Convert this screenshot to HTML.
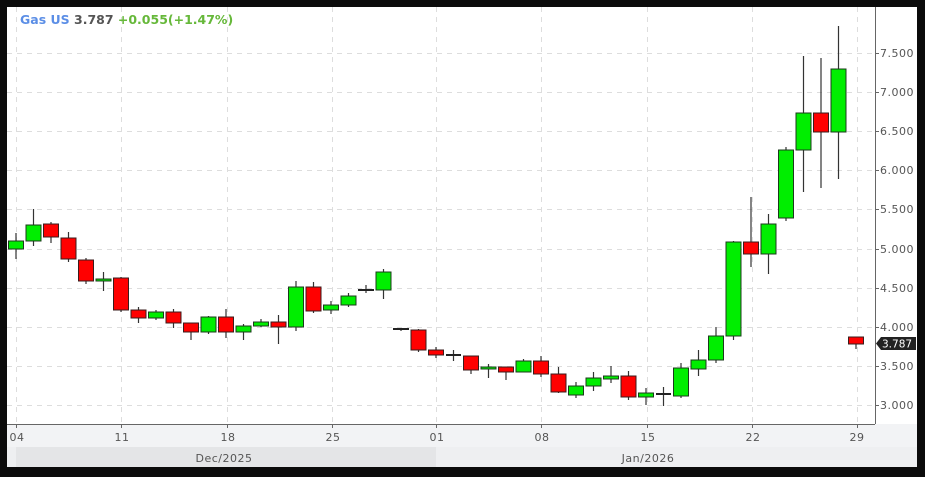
<!DOCTYPE html>
<html><head><meta charset="utf-8"><style>
html,body{margin:0;padding:0;background:#0b0b0b;}
svg{display:block;font-family:"DejaVu Sans","Liberation Sans",sans-serif;}
</style></head><body>
<svg width="925" height="477" viewBox="0 0 925 477" xmlns="http://www.w3.org/2000/svg">
<rect x="0" y="0" width="925" height="477" fill="#0b0b0b"/>
<rect x="7" y="7" width="910" height="417" fill="#fff"/>
<rect x="7" y="424" width="910" height="24" fill="#f2f3f5"/>
<rect x="7" y="447" width="910" height="20" fill="#eeeff1"/>
<rect x="16" y="447" width="420" height="20" fill="#e4e5e7"/>
<g stroke="#ddd" stroke-dasharray="5,5" stroke-width="1">
<line x1="7" y1="53.5" x2="875" y2="53.5"/><line x1="7" y1="92.5" x2="875" y2="92.5"/><line x1="7" y1="131.5" x2="875" y2="131.5"/><line x1="7" y1="170.5" x2="875" y2="170.5"/><line x1="7" y1="209.5" x2="875" y2="209.5"/><line x1="7" y1="249.5" x2="875" y2="249.5"/><line x1="7" y1="288.5" x2="875" y2="288.5"/><line x1="7" y1="327.5" x2="875" y2="327.5"/><line x1="7" y1="366.5" x2="875" y2="366.5"/><line x1="7" y1="405.5" x2="875" y2="405.5"/>
<line x1="16.5" y1="7" x2="16.5" y2="424"/><line x1="121.5" y1="7" x2="121.5" y2="424"/><line x1="227.5" y1="7" x2="227.5" y2="424"/><line x1="332.5" y1="7" x2="332.5" y2="424"/><line x1="436.5" y1="7" x2="436.5" y2="424"/><line x1="541.5" y1="7" x2="541.5" y2="424"/><line x1="647.5" y1="7" x2="647.5" y2="424"/><line x1="752.5" y1="7" x2="752.5" y2="424"/><line x1="857.5" y1="7" x2="857.5" y2="424"/>
</g>
<line x1="875.5" y1="7" x2="875.5" y2="424" stroke="#666"/>
<line x1="7" y1="424.5" x2="875" y2="424.5" stroke="#666"/>
<g stroke="#666">
<line x1="875" y1="53.5" x2="879" y2="53.5"/><line x1="875" y1="92.5" x2="879" y2="92.5"/><line x1="875" y1="131.5" x2="879" y2="131.5"/><line x1="875" y1="170.5" x2="879" y2="170.5"/><line x1="875" y1="209.5" x2="879" y2="209.5"/><line x1="875" y1="249.5" x2="879" y2="249.5"/><line x1="875" y1="288.5" x2="879" y2="288.5"/><line x1="875" y1="327.5" x2="879" y2="327.5"/><line x1="875" y1="366.5" x2="879" y2="366.5"/><line x1="875" y1="405.5" x2="879" y2="405.5"/>
<line x1="16.5" y1="424" x2="16.5" y2="428"/><line x1="121.5" y1="424" x2="121.5" y2="428"/><line x1="227.5" y1="424" x2="227.5" y2="428"/><line x1="332.5" y1="424" x2="332.5" y2="428"/><line x1="436.5" y1="424" x2="436.5" y2="428"/><line x1="541.5" y1="424" x2="541.5" y2="428"/><line x1="647.5" y1="424" x2="647.5" y2="428"/><line x1="752.5" y1="424" x2="752.5" y2="428"/><line x1="857.5" y1="424" x2="857.5" y2="428"/>
</g>
<g font-size="11" fill="#555" letter-spacing="0.5">
<text x="880" y="57">7.500</text><text x="880" y="96">7.000</text><text x="880" y="135">6.500</text><text x="880" y="174">6.000</text><text x="880" y="213">5.500</text><text x="880" y="253">5.000</text><text x="880" y="292">4.500</text><text x="880" y="331">4.000</text><text x="880" y="370">3.500</text><text x="880" y="409">3.000</text>
</g>
<path d="M876 343.5 L881 337 L916 337 L916 350 L881 350 Z" fill="#222"/>
<text x="882" y="347.5" font-size="10.5" fill="#fff">3.787</text>
<g font-size="11" fill="#555" text-anchor="middle" letter-spacing="0.5">
<text x="17" y="441">04</text><text x="122" y="441">11</text><text x="228" y="441">18</text><text x="333" y="441">25</text><text x="437" y="441">01</text><text x="542" y="441">08</text><text x="648" y="441">15</text><text x="753" y="441">22</text><text x="857" y="441">29</text>
<text x="224" y="462">Dec/2025</text><text x="648" y="462">Jan/2026</text>
</g>
<text x="20" y="24" font-size="12.5" font-weight="bold"><tspan fill="#5b8ee6">Gas US </tspan><tspan fill="#555">3.787 </tspan><tspan fill="#66b83a">+0.055(+1.47%)</tspan></text>
<g stroke="#333" stroke-width="1.2">
<line x1="16" y1="233" x2="16" y2="259"/><line x1="33.5" y1="209" x2="33.5" y2="246"/><line x1="51" y1="222" x2="51" y2="243"/><line x1="68.5" y1="232" x2="68.5" y2="262"/><line x1="86" y1="258" x2="86" y2="284"/><line x1="103.5" y1="272" x2="103.5" y2="291"/><line x1="121" y1="277" x2="121" y2="312"/><line x1="138.5" y1="307" x2="138.5" y2="323"/><line x1="156" y1="310" x2="156" y2="320"/><line x1="173.5" y1="309" x2="173.5" y2="328"/><line x1="191" y1="323" x2="191" y2="340"/><line x1="208.5" y1="316" x2="208.5" y2="334"/><line x1="226" y1="309" x2="226" y2="338"/><line x1="243.5" y1="324" x2="243.5" y2="340"/><line x1="261" y1="319" x2="261" y2="327"/><line x1="278.5" y1="315" x2="278.5" y2="344"/><line x1="296" y1="281" x2="296" y2="331"/><line x1="313.5" y1="282" x2="313.5" y2="313"/><line x1="331" y1="301" x2="331" y2="314"/><line x1="348.5" y1="293" x2="348.5" y2="307"/><line x1="366" y1="285" x2="366" y2="293"/><line x1="383.5" y1="269" x2="383.5" y2="299"/>
<line x1="401" y1="328" x2="401" y2="331"/><line x1="418.5" y1="329" x2="418.5" y2="352"/><line x1="436" y1="347" x2="436" y2="358"/><line x1="453.5" y1="350" x2="453.5" y2="361"/><line x1="471" y1="356" x2="471" y2="374"/><line x1="488.5" y1="364" x2="488.5" y2="378"/><line x1="506" y1="367" x2="506" y2="380"/><line x1="523.5" y1="359" x2="523.5" y2="372"/><line x1="541" y1="356" x2="541" y2="377"/><line x1="558.5" y1="367" x2="558.5" y2="393"/><line x1="576" y1="382" x2="576" y2="398"/><line x1="593.5" y1="372" x2="593.5" y2="391"/><line x1="611" y1="366" x2="611" y2="383"/><line x1="628.5" y1="371" x2="628.5" y2="400"/><line x1="646" y1="388" x2="646" y2="405"/><line x1="663.5" y1="387" x2="663.5" y2="406"/><line x1="681" y1="363" x2="681" y2="398"/><line x1="698.5" y1="350" x2="698.5" y2="376"/><line x1="716" y1="327" x2="716" y2="363"/><line x1="733.5" y1="241" x2="733.5" y2="340"/><line x1="751" y1="197" x2="751" y2="267"/><line x1="768.5" y1="214" x2="768.5" y2="274"/><line x1="786" y1="147" x2="786" y2="221"/><line x1="803.5" y1="56" x2="803.5" y2="192"/><line x1="821" y1="58" x2="821" y2="188"/><line x1="838.5" y1="26" x2="838.5" y2="179"/><line x1="856" y1="337" x2="856" y2="349"/>
</g>
<g stroke="#1c3a1c" stroke-width="1">
<g fill="#00ee00">
<rect x="8.5" y="241" width="15" height="8"/><rect x="26" y="225" width="15" height="16"/><rect x="96" y="279" width="15" height="2"/><rect x="148.5" y="312" width="15" height="6"/><rect x="201" y="317" width="15" height="15"/><rect x="236" y="326" width="15" height="6"/><rect x="253.5" y="322" width="15" height="4"/><rect x="288.5" y="287" width="15" height="40"/><rect x="323.5" y="305" width="15" height="5"/><rect x="341" y="296" width="15" height="9"/><rect x="376" y="272" width="15" height="18"/>
<rect x="481" y="367" width="15" height="2"/><rect x="516" y="361" width="15" height="11"/><rect x="568.5" y="386" width="15" height="9"/><rect x="586" y="378" width="15" height="8"/><rect x="603.5" y="376" width="15" height="3"/><rect x="638.5" y="393" width="15" height="4"/><rect x="673.5" y="368" width="15" height="28"/><rect x="691" y="360" width="15" height="9"/><rect x="708.5" y="336" width="15" height="24"/><rect x="726" y="242" width="15" height="94"/><rect x="761" y="224" width="15" height="30"/><rect x="778.5" y="150" width="15" height="68"/><rect x="796" y="113" width="15" height="37"/><rect x="831" y="69" width="15" height="63"/>
</g>
<g fill="#ff0000" stroke="#3a1c1c">
<rect x="43.5" y="224" width="15" height="13"/><rect x="61" y="238" width="15" height="21"/><rect x="78.5" y="260" width="15" height="21"/><rect x="113.5" y="278" width="15" height="32"/><rect x="131" y="310" width="15" height="8"/><rect x="166" y="312" width="15" height="11"/><rect x="183.5" y="323" width="15" height="9"/><rect x="218.5" y="317" width="15" height="15"/><rect x="271" y="322" width="15" height="5"/><rect x="306" y="287" width="15" height="24"/>
<rect x="411" y="330" width="15" height="20"/><rect x="428.5" y="350" width="15" height="5"/><rect x="463.5" y="356" width="15" height="14"/><rect x="498.5" y="367" width="15" height="5"/><rect x="533.5" y="361" width="15" height="13"/><rect x="551" y="374" width="15" height="18"/><rect x="621" y="376" width="15" height="21"/><rect x="743.5" y="242" width="15" height="12"/><rect x="813.5" y="113" width="15" height="19"/><rect x="848.5" y="337" width="15" height="7"/>
</g>
</g>
<g stroke="#222" stroke-width="2">
<line x1="358" y1="290" x2="374" y2="290"/><line x1="393" y1="329" x2="409" y2="329"/><line x1="446" y1="355" x2="461" y2="355"/><line x1="656" y1="394" x2="671" y2="394"/>
</g>
</svg>
</body></html>
